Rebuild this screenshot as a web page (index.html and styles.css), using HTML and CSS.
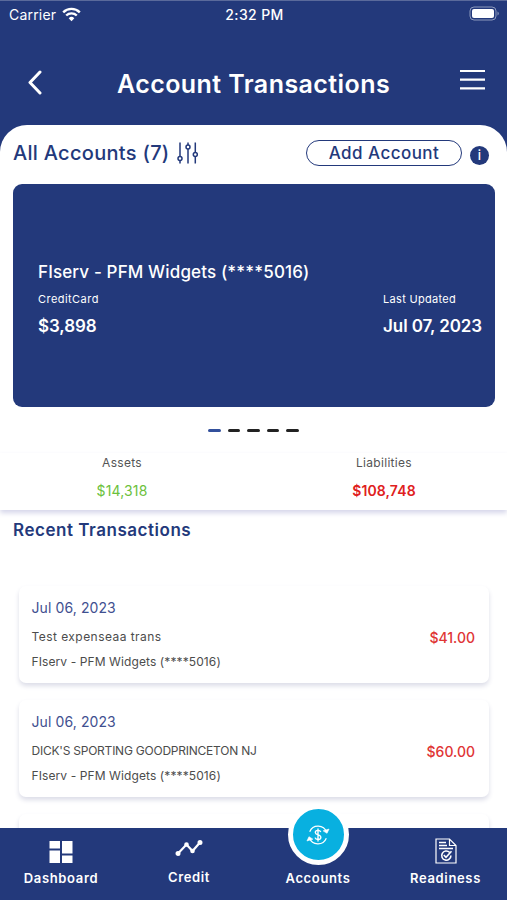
FILE: index.html
```html
<!DOCTYPE html>
<html lang="en">
  <head>
    <meta charset="UTF-8" />
    <meta name="viewport" content="width=device-width, initial-scale=1.0" />
    <title>Account Transactions</title>
    <link rel="stylesheet" href="styles.css">
  </head>
  <body>
    <div class="status">
      <div class="carrier">
        <span>Carrier</span>
        <svg width="19" height="15" viewBox="0 0 19 15" fill="none" stroke="#fff" stroke-width="2.4">
          <path d="M1.2 5.3a11.8 11.8 0 0 1 16.6 0"/>
          <path d="M4.2 8.5a7.6 7.6 0 0 1 10.6 0"/>
          <path d="M9.5 14.2L6.7 11.2a4 4 0 0 1 5.6 0z" fill="#fff" stroke="none"/>
        </svg>
      </div>
      <span class="time">2:32 PM</span>
      <svg class="battery" width="31" height="15" viewBox="0 0 31 15">
        <rect x="1" y="1" width="26" height="13" rx="4" fill="none" stroke="#8d9abd"/>
        <rect x="3" y="3" width="22" height="9" rx="2" fill="#fff"/>
        <path d="M28.5 5.5v4a2.2 2.2 0 0 0 0-4z" fill="#8d9abd"/>
      </svg>
    </div>

    <header>
      <svg width="16" height="26" viewBox="0 0 16 26" fill="none" stroke="#fff" stroke-width="3" stroke-linecap="round" stroke-linejoin="round">
        <path d="M13 2L3 12.5 13 23"/>
      </svg>
      <h1>Account Transactions</h1>
      <svg class="menu" width="25" height="22" viewBox="0 0 25 22" stroke="#fff" stroke-width="2.2">
        <path d="M0 2h25M0 10.7h25M0 19.4h25"/>
      </svg>
    </header>

    <main>
      <section class="accounts">
        <h2>All Accounts (7)</h2>
        <svg class="filter" width="22" height="24" viewBox="0 0 22 24" fill="none" stroke="#23397b" stroke-width="1.5">
          <path d="M3 1.5v14M3 19.500v3M11 1.500v2.500M11 8v14.500M18.300 1.500v10M18.300 15.500v7"/>
          <circle cx="3" cy="17.5" r="2"/>
          <circle cx="11" cy="6" r="2"/>
          <circle cx="18.3" cy="13.5" r="2"/>
        </svg>
        <button class="add">Add Account</button>
        <span class="info">i</span>
      </section>

      <section class="card">
        <div class="card-name">FIserv - PFM Widgets (****5016)</div>
        <div class="card-row">
          <div>
            <div class="small type">CreditCard</div>
            <div class="big">$3,898</div>
          </div>
          <div>
            <div class="small">Last Updated</div>
            <div class="big">Jul 07, 2023</div>
          </div>
        </div>
      </section>

      <div class="dots"><i class="active"></i><i></i><i></i><i></i><i></i></div>

      <section class="totals">
        <div>
          <div class="label">Assets</div>
          <div class="green">$14,318</div>
        </div>
        <div>
          <div class="label">Liabilities</div>
          <div class="red">$108,748</div>
        </div>
      </section>

      <h3>Recent Transactions</h3>

      <ul class="list">
        <li class="item">
          <div>
            <div class="date">Jul 06, 2023</div>
            <div class="desc test">Test expenseaa trans</div>
            <div class="desc">FIserv - PFM Widgets (****5016)</div>
          </div>
          <div class="amount">$41.00</div>
        </li>
        <li class="item">
          <div>
            <div class="date">Jul 06, 2023</div>
            <div class="desc dicks">DICK'S SPORTING GOODPRINCETON NJ</div>
            <div class="desc">FIserv - PFM Widgets (****5016)</div>
          </div>
          <div class="amount">$60.00</div>
        </li>
        <li class="item"></li>
      </ul>
    </main>

    <nav>
      <a class="tab">
        <svg width="24" height="24" viewBox="0 0 24 24" fill="#fff">
          <path d="M.5 1H11v7.500H.5zM13 1h10.500v12.500H13zM.5 10.500H11V23H.5zM13 15.500h10.500V23H13z"/>
        </svg>
        <span>Dashboard</span>
      </a>
      <a class="tab credit">
        <svg width="28" height="18" viewBox="0 0 28 18" fill="#fff" stroke="#fff" stroke-width="2.2">
          <path d="M3 14.500L11.500 5.500l6 6.500L25 3.500" fill="none"/>
          <circle cx="3" cy="14.5" r="1.4"/>
          <circle cx="11.5" cy="5.5" r="1.2"/>
          <circle cx="17.5" cy="12" r="1.2"/>
          <circle cx="25" cy="3.5" r="1.4"/>
        </svg>
        <span>Credit</span>
      </a>
      <a class="tab accounts-tab">
        <div class="bubble">
          <svg width="24" height="24" viewBox="0 0 26 26" fill="none" stroke="#fff" stroke-width="1.3">
            <path d="M4 9.500A9.800 9.800 0 0 1 22.300 10M22 16.500A9.800 9.800 0 0 1 3.700 16"/>
            <path d="M18.500 8.500l4.300 2.700 2.200-4.700zM7.500 17.500l-4.300-2.700L1 19.500z" fill="#fff" stroke-width=".6"/>
            <path d="M16 9.800c-.5-1.300-1.600-1.800-3-1.800-1.700 0-2.900.9-2.900 2.300 0 3.300 6 1.800 6 5.200 0 1.500-1.300 2.500-3.100 2.500-1.600 0-2.800-.7-3.200-2.100M13 6v14" stroke-width="1.5"/>
          </svg>
        </div>
        <span>Accounts</span>
      </a>
      <a class="tab">
        <svg width="22" height="26" viewBox="0 0 22 26" fill="none" stroke="#fff" stroke-width="1.2">
          <path d="M1 1h13.500L21 7.500V25H1zM14.500 1v6.500H21"/>
          <path d="M4 4.500h7M4 7.500h8M4 10.500h14" stroke-width="1.5"/>
          <path d="M14.500 14.300a4.600 4.600 0 1 0 1.400 3.200M8.800 17l2.200 2.300 5.500-6" stroke-width="1.6"/>
        </svg>
        <span>Readiness</span>
      </a>
    </nav>
  </body>
</html>
```

FILE: styles.css
```css
* {
  margin: 0;
  padding: 0;
  box-sizing: border-box;
}

body {
  width: 507px;
  height: 900px;
  overflow: hidden;
  display: flex;
  flex-direction: column;
  font-family: Inter, sans-serif;
  color: #fff;
  background: #23397b;
  border-top: 1px solid #5a6a9b;
  white-space: nowrap;
}

svg {
  display: block;
  flex: none;
}

ul {
  list-style: none;
}

.status {
  height: 27px;
  padding: 0 7px 0 9px;
  display: grid;
  grid-template-columns: 1fr auto 1fr;
  align-items: center;
  font-size: 14px;
  letter-spacing: 0.2px;
}

.carrier {
  display: flex;
  align-items: center;
  gap: 6px;
}

.battery {
  justify-self: end;
  margin-top: -2px;
}

.time {
  font-weight: 500;
  letter-spacing: 0.4px;
}

header {
  height: 97px;
  padding: 12px 22px 0 27px;
  display: flex;
  align-items: center;
  justify-content: space-between;
}

h1 {
  padding: 2px 0 0 4px;
  font-size: 25px;
  font-weight: 600;
  letter-spacing: 0.43px;
}

.menu {
  margin-top: -6px;
}

main {
  flex: 1;
  min-height: 0;
  overflow: hidden;
  background: #fff;
  border-radius: 27px 27px 0 0;
}

.accounts {
  height: 59px;
  padding: 0 18px 3px 13px;
  display: flex;
  align-items: center;
  color: #23397b;
}

h2 {
  font-size: 20px;
  font-weight: 500;
  letter-spacing: 0.3px;
}

.filter {
  margin-left: 7px;
}

.add {
  width: 156px;
  height: 26px;
  margin-left: auto;
  border: 1px solid #23397b;
  border-radius: 13px;
  background: #fff;
  color: #23397b;
  font: 500 17px/22px Inter, sans-serif;
  letter-spacing: 0.45px;
}

.info {
  width: 19px;
  height: 19px;
  margin: 4px 0 0 8px;
  border-radius: 50%;
  background: #23397b;
  color: #fff;
  font-size: 13px;
  font-weight: 500;
  line-height: 19px;
  text-align: center;
}

.card {
  height: 223px;
  margin: 0 12px 0 13px;
  padding: 75px 13px 0 25px;
  border-radius: 9px;
  background: #23397b;
}

.card-name {
  font-size: 17px;
  font-weight: 500;
  line-height: 26px;
  letter-spacing: 0.14px;
}

.card-row {
  display: flex;
  justify-content: space-between;
}

.small {
  margin-top: 5px;
  font-size: 11px;
  line-height: 18px;
  letter-spacing: 0.3px;
}

.type {
  letter-spacing: 0.45px;
}

.big {
  margin-top: 5px;
  font-size: 17px;
  font-weight: 600;
  line-height: 26px;
  letter-spacing: -0.1px;
}

.dots {
  height: 46px;
  display: flex;
  justify-content: center;
  align-items: center;
  gap: 7px;
}

.dots i {
  width: 12.5px;
  height: 3px;
  border-radius: 2px;
  background: #222;
}

.dots .active {
  background: #33509c;
}

.totals {
  height: 57px;
  display: grid;
  grid-template-columns: 244px 246px;
  justify-content: space-between;
  text-align: center;
  box-shadow: 0 3px 5px #d5d6ea;
}

.label {
  font-size: 12px;
  line-height: 20px;
  letter-spacing: 0.3px;
  color: #555;
}

.green {
  margin-top: 8px;
  font-size: 14px;
  line-height: 20px;
  letter-spacing: 0.15px;
  color: #6cc13c;
}

.red {
  margin-top: 8px;
  font-size: 14px;
  font-weight: 600;
  line-height: 20px;
  letter-spacing: 0.1px;
  color: #e02020;
}

h3 {
  padding: 7px 13px 0;
  font-size: 17px;
  font-weight: 600;
  line-height: 26px;
  letter-spacing: 0.53px;
  color: #23397b;
}

.list {
  padding: 43px 18px 0 19px;
}

.item {
  height: 97px;
  margin-bottom: 17px;
  padding: 11px 14px 0 12.5px;
  display: flex;
  justify-content: space-between;
  border-radius: 7px;
  box-shadow: 0 3px 5px #dcdde8;
}

.date {
  margin-bottom: 8px;
  font-size: 14px;
  line-height: 22px;
  letter-spacing: 0.1px;
  color: #3f5090;
}

.desc {
  margin-bottom: 5px;
  font-size: 12px;
  line-height: 20px;
  letter-spacing: 0.1px;
  color: #4c4c4c;
}

.test {
  letter-spacing: 0.45px;
}

.dicks {
  letter-spacing: -0.23px;
}

.amount {
  padding-top: 30px;
  font-size: 14px;
  font-weight: 500;
  line-height: 22px;
  color: #e03535;
}

nav {
  height: 72px;
  display: grid;
  grid-template-columns: 122px 134px 124px 131px;
  grid-template-rows: 72px;
  background: #23397b;
  position: relative;
  z-index: 1;
}

.tab {
  display: flex;
  flex-direction: column;
  align-items: center;
  justify-content: flex-end;
  gap: 4px;
  padding-bottom: 12px;
  font-size: 13px;
  font-weight: 600;
  line-height: 20px;
  letter-spacing: 0.65px;
}

.credit {
  gap: 10px;
  padding-bottom: 13px;
}

.accounts-tab {
  gap: 3px;
}

.bubble {
  flex: none;
  width: 61px;
  height: 61px;
  border: 5px solid #fff;
  border-radius: 50%;
  background: #08b0e0;
  display: flex;
  align-items: center;
  justify-content: center;
}
```
